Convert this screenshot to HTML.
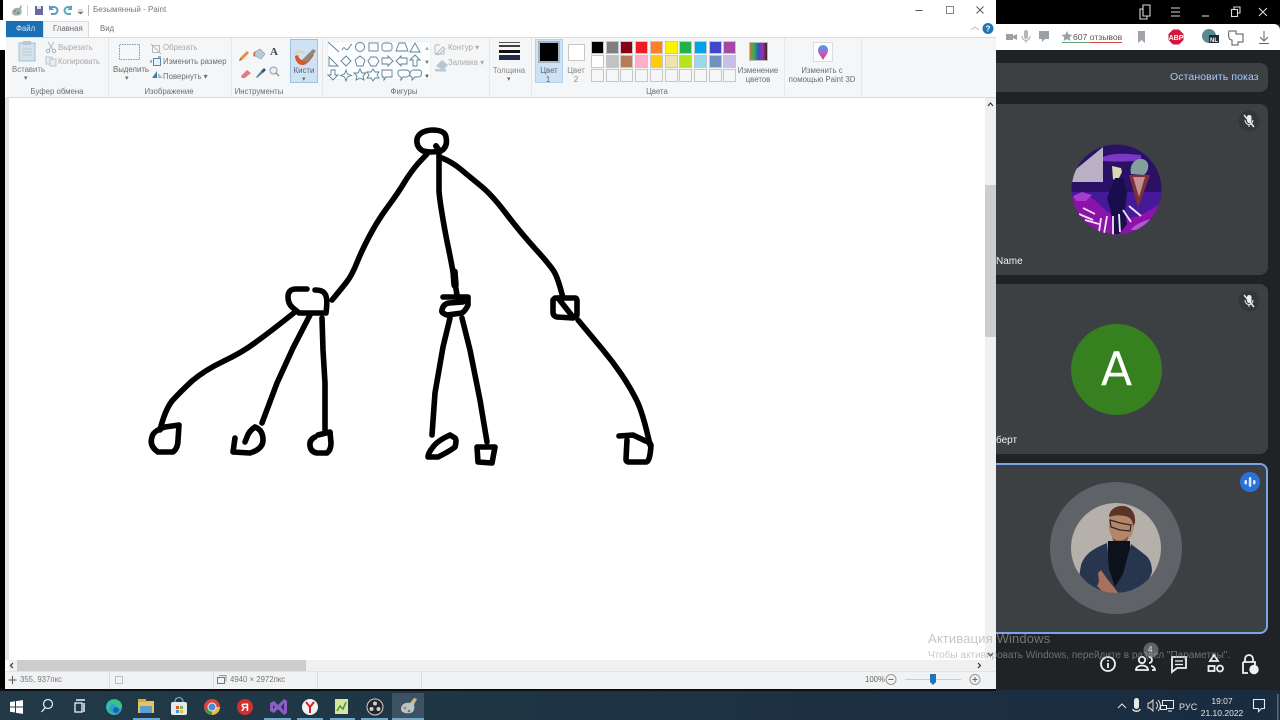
<!DOCTYPE html>
<html><head><meta charset="utf-8"><title>Paint</title>
<style>
html,body{margin:0;padding:0;width:1280px;height:720px;overflow:hidden;background:#202326}
body{position:relative;font-family:"Liberation Sans","Noto Sans CJK SC",sans-serif;filter:blur(.35px)}
.a{position:absolute}
.t{position:absolute;font-size:7.800px;line-height:10px;margin-top:1px;color:#6a6e72;white-space:nowrap;letter-spacing:0}
.c{text-align:center;transform:translateX(-50%)}
.tile{position:absolute;left:996px;width:272px;background:#3c4043;border-radius:0 8px 8px 0}
.sw{position:absolute;width:11px;height:11px;border:1px solid #c6c6c6}
svg{position:absolute;overflow:visible}
</style></head><body>

<!-- left edge -->
<div class="a" style="left:0;top:0;width:6px;height:50px;background:#fff"></div>
<div class="a" style="left:0;top:50px;width:5px;height:640px;background:#000"></div>
<div class="a" style="left:0;top:0;width:3px;height:20px;background:#000"></div>

<!-- paint window -->
<div class="a" style="left:5px;top:0;width:991px;height:689px;background:#fff"></div>
<div class="a" style="left:996px;top:50px;width:4px;height:48px;background:#202326"></div>

<!-- QAT -->
<svg style="left:0;top:0" width="120" height="22">
 <path d="M12 13c0-4 4-6 7-5l2-3 1 1-1 3c1 2 1 5-1 6s-8 1-8-2z" fill="#9fb0a8"/><circle cx="15" cy="11" r="1" fill="#e06a3a"/><circle cx="18" cy="13" r="1" fill="#4a7ac0"/>
 <rect x="27" y="5" width="1" height="11" fill="#d0d0d0"/>
 <rect x="35" y="6" width="8" height="9" fill="#6a6a9a"/><rect x="37" y="6" width="4" height="3" fill="#dde"/>
 <path d="M50 7h4a3 3 0 0 1 0 7h-3" fill="none" stroke="#5a9ac8" stroke-width="2"/><path d="M49 5v5h5z" fill="#5a9ac8"/>
 <path d="M71 7h-3a3 3 0 0 0 0 7h3" fill="none" stroke="#5aa8c0" stroke-width="2"/><path d="M72 5v5h-5z" fill="#5aa8c0"/>
 <path d="M78 10h5M78 12h5l-2.500 2z" fill="#666" stroke="#777" stroke-width=".6"/>
 <rect x="88" y="5" width="1" height="11" fill="#bbb"/>
</svg>
<div class="t" style="left:93px;top:4px;font-size:8px;color:#777">Безымянный - Paint</div>

<!-- window buttons -->
<svg style="left:900px;top:0" width="90" height="20">
 <path d="M15.500 10.500h7" stroke="#555"/><rect x="46.500" y="6.500" width="7" height="7" fill="none" stroke="#888"/>
 <path d="M76.500 6.500l7 7M83.500 6.500l-7 7" stroke="#555"/>
</svg>

<!-- tabs -->
<div class="a" style="left:6px;top:21px;width:37px;height:16px;background:#1a6fb5"></div>
<div class="t" style="left:16px;top:23px;color:#dfeaf4">Файл</div>
<div class="a" style="left:43px;top:21px;width:46px;height:17px;background:#f5f6f7;border:1px solid #dadbdc;border-bottom:none;box-sizing:border-box"></div>
<div class="t" style="left:53px;top:23px">Главная</div>
<div class="t" style="left:100px;top:23px">Вид</div>
<svg style="left:970px;top:22px" width="26" height="15"><path d="M1 8l4-3 4 3" fill="none" stroke="#c0c0c0"/><circle cx="18" cy="6.500" r="5.500" fill="#1d76b8"/><text x="18" y="9.500" font-size="8" font-weight="bold" fill="#fff" text-anchor="middle" font-family="Liberation Sans">?</text></svg>

<!-- ribbon -->
<div class="a" style="left:6px;top:37px;width:990px;height:59px;background:#f5f6f7;border-top:1px solid #dadbdc;border-bottom:1px solid #d8d9da"></div>
<div class="a" style="left:108px;top:38px;width:1px;height:58px;background:#e6e7e8"></div>
<div class="a" style="left:231px;top:38px;width:1px;height:58px;background:#e6e7e8"></div>
<div class="a" style="left:322px;top:38px;width:1px;height:58px;background:#e6e7e8"></div>
<div class="a" style="left:489px;top:38px;width:1px;height:58px;background:#e6e7e8"></div>
<div class="a" style="left:531px;top:38px;width:1px;height:58px;background:#e6e7e8"></div>
<div class="a" style="left:784px;top:38px;width:1px;height:58px;background:#e6e7e8"></div>
<div class="a" style="left:861px;top:38px;width:1px;height:58px;background:#e6e7e8"></div>

<!-- clipboard -->
<svg style="left:0;top:38px" width="110" height="40">
 <rect x="19" y="5" width="16" height="18" fill="#d3e2ec" stroke="#a9bfcc"/><rect x="23" y="3" width="8" height="4" fill="#b8c8d2"/>
 <path d="M22 11h10M22 14h10M22 17h10" stroke="#bccbd4"/>
 <path d="M48 4l5 8M54 4l-5 8" stroke="#bcc4ca" stroke-width="1.200"/><circle cx="48" cy="13" r="1.700" fill="none" stroke="#a8b0b6"/><circle cx="54" cy="13" r="1.700" fill="none" stroke="#a8b0b6"/>
 <rect x="46" y="19" width="6" height="7" fill="#e4eef4" stroke="#b7c7d2"/><rect x="50" y="21" width="6" height="7" fill="#e4eef4" stroke="#b7c7d2"/>
</svg>
<div class="t" style="left:12px;top:64px;color:#777">Вставить</div>
<div class="t" style="left:24px;top:73px;font-size:7px">▾</div>
<div class="t" style="left:58px;top:42px;color:#a8a8a8">Вырезать</div>
<div class="t" style="left:58px;top:56px;color:#a8a8a8">Копировать</div>
<div class="t c" style="left:57px;top:86px">Буфер обмена</div>

<!-- image -->
<svg style="left:110px;top:38px" width="120" height="50">
 <rect x="9.500" y="6.500" width="20" height="15" fill="#f3f8fb" stroke="#7f99ac" stroke-dasharray="1.500 1"/>
 <rect x="42.500" y="7.500" width="7" height="7" fill="none" stroke="#b4bcc2"/><path d="M41 6l10 10" stroke="#b4bcc2"/>
 <rect x="43.500" y="20.500" width="7" height="7" fill="#e9f2f8" stroke="#5a86a8"/><path d="M41 25v-3M48 19h3" stroke="#2f74a8"/>
 <path d="M42 40l5-7v7z" fill="#3d7fa8"/><path d="M48 40h5l-5-5z" fill="#9cc0d4"/>
</svg>
<div class="t" style="left:113px;top:64px;color:#666">Выделить</div>
<div class="t" style="left:125px;top:73px;font-size:7px">▾</div>
<div class="t" style="left:163px;top:42px;color:#a8a8a8">Обрезать</div>
<div class="t" style="left:163px;top:56px">Изменить размер</div>
<div class="t" style="left:163px;top:71px">Повернуть ▾</div>
<div class="t c" style="left:169px;top:86px">Изображение</div>

<!-- tools -->
<div class="a" style="left:290px;top:39px;width:28px;height:44px;background:#cde3f5;border:1px solid #9cc3e0;box-sizing:border-box"></div>
<svg style="left:236px;top:44px" width="90" height="40">
 <path d="M4 14l7-7 2 2-7 7z" fill="#e0913a"/><path d="M4 14l-1 3 3-1z" fill="#b06030"/>
 <path d="M19 8l5-3 5 5-4 5-6-3z" fill="#b8ccd8" stroke="#7e98aa" stroke-width=".6"/><path d="M19 8c-2 2-1 4 0 4" fill="none" stroke="#c04040"/>
 <path d="M5 32l6-6 4 3-6 5h-3z" fill="#e27b86"/>
 <path d="M20 33l5-6 2 2-6 5z" fill="#5d8aa8"/><path d="M25 27l3-3 2 2-3 3z" fill="#2c5a7a"/>
 <circle cx="37.500" cy="26.500" r="3.500" fill="#e8f1f6" stroke="#8aa0b0"/><path d="M40 29l3 3" stroke="#b48a50" stroke-width="1.500"/>
 <path d="M59 12c0 7 6 11 11 8 3-2 6-6 8-9l-2-1-6 6c-3 1-7 0-8-5z" fill="#d8582a"/>
 <path d="M59 10c2-3 7-3 10-1" fill="none" stroke="#e8cfa0" stroke-width="2"/>
 <path d="M66 16l11-11 3 2-9 11z" fill="#8d8a7a"/>
</svg>
<div class="t" style="left:270px;top:46px;font-size:11px;font-weight:bold;font-family:'Liberation Serif',serif;color:#3a4a58">A</div>
<div class="t c" style="left:304px;top:65px;color:#5a6066">Кисти</div>
<div class="t" style="left:302px;top:74px;font-size:7px">▾</div>
<div class="t c" style="left:259px;top:86px">Инструменты</div>

<!-- shapes -->
<div class="a" style="left:327px;top:41px;width:104px;height:39px;background:#fbfdfe;border:1px solid #eef2f4;box-sizing:border-box"></div>
<svg style="left:327px;top:41px" width="106" height="40" fill="none" stroke="#5c8096" stroke-width=".9">
 <path d="M1 1l11 10M15 9c3-6 3 2 6-1s2-4 4-5"/><circle cx="33" cy="6" r="4.500"/><rect x="42" y="2" width="9" height="8"/><rect x="55" y="2" width="10" height="8" rx="2.500"/><path d="M69 10l3-8h6l3 8z"/><path d="M83 11l5-9 5 9z"/>
 <path d="M2 25v-9l9 9zM19 15l5 5-5 5-5-5zM33 15l5 4-2 6h-6l-2-6zM44 16h5l3 4-3 5h-5l-3-5zM55 17h6v-2l5 5-5 5v-2h-6zM80 17h-6v-2l-5 5 5 5v-2h6zM88 14l5 5h-3v6h-4v-6h-3z"/>
 <path d="M4 29h4v5h3l-5 5-5-5h3zM19 29l1.500 4 4 1.500-4 1.500-1.500 4-1.500-4-4-1.500 4-1.500zM33 28l2 4h4l-3 3 1 4-4-2-4 2 1-4-3-3h4zM46 28l2 3h4l-2 3 2 3h-4l-2 3-2-3h-4l2-3-2-3h4z"/>
 <path d="M55 29h10v7h-6l-2 3v-3h-2zM73 29h6c5 0 5 7 0 7h-3l-2 3v-3c-4-1-4-7-1-7zM86 29h5c4 0 4 3 3 4 1 2-1 3-3 3h-3l-3 3v-3c-3 0-3-6 1-7z"/>
</svg>
<div class="t" style="left:424px;top:43px;font-size:6px;color:#aaa">▲</div>
<div class="t" style="left:424px;top:57px;font-size:6px;color:#777">▼</div>
<div class="t" style="left:424px;top:71px;font-size:6px;color:#555">▼</div>
<svg style="left:434px;top:42px" width="16" height="30"><path d="M2 12l7-7 2 2-7 6zM1 3h5M1 3v9h9V8" fill="none" stroke="#b4bcc2"/><path d="M2 24l6-6 6 5-5 5z" fill="#b5c6d2"/><rect x="1" y="27" width="11" height="2.500" fill="#c0c8ce"/></svg>
<div class="t" style="left:448px;top:42px;color:#a8a8a8">Контур ▾</div>
<div class="t" style="left:448px;top:57px;color:#a8a8a8">Заливка ▾</div>
<div class="t c" style="left:404px;top:86px">Фигуры</div>

<!-- thickness -->
<div class="a" style="left:499px;top:42px;width:21px;height:1px;background:#555"></div>
<div class="a" style="left:499px;top:45px;width:21px;height:2px;background:#3a3f44"></div>
<div class="a" style="left:499px;top:50px;width:21px;height:3px;background:#111"></div>
<div class="a" style="left:499px;top:55px;width:21px;height:5px;background:#1f2d4a"></div>
<div class="t c" style="left:509px;top:65px;color:#888">Толщина</div>
<div class="t" style="left:507px;top:74px;font-size:7px">▾</div>

<!-- colors -->
<div class="a" style="left:535px;top:39px;width:28px;height:44px;background:#cde3f5;border:1px solid #b1d2ec;box-sizing:border-box"></div>
<div class="a" style="left:538px;top:41px;width:22px;height:22px;background:#000;border:2px solid #a7b5c0;box-sizing:border-box"></div>
<div class="t c" style="left:549px;top:65px;color:#5d6368">Цвет</div><div class="t c" style="left:548px;top:74px;color:#5d6368">1</div>
<div class="a" style="left:568px;top:44px;width:17px;height:17px;background:#fff;border:1px solid #c6c6c6;box-sizing:border-box"></div>
<div class="t c" style="left:576px;top:65px;color:#888">Цвет</div><div class="t c" style="left:576px;top:74px;color:#888">2</div>

<div class="sw" style="left:591px;top:41px;background:#000"></div><div class="sw" style="left:606px;top:41px;background:#7f7f7f"></div><div class="sw" style="left:620px;top:41px;background:#880015"></div><div class="sw" style="left:635px;top:41px;background:#ed1c24"></div><div class="sw" style="left:650px;top:41px;background:#ff7f27"></div><div class="sw" style="left:665px;top:41px;background:#fff200"></div><div class="sw" style="left:679px;top:41px;background:#22b14c"></div><div class="sw" style="left:694px;top:41px;background:#00a2e8"></div><div class="sw" style="left:709px;top:41px;background:#3f48cc"></div><div class="sw" style="left:723px;top:41px;background:#a349a4"></div>
<div class="sw" style="left:591px;top:55px;background:#fff"></div><div class="sw" style="left:606px;top:55px;background:#c3c3c3"></div><div class="sw" style="left:620px;top:55px;background:#b97a57"></div><div class="sw" style="left:635px;top:55px;background:#ffaec9"></div><div class="sw" style="left:650px;top:55px;background:#ffc90e"></div><div class="sw" style="left:665px;top:55px;background:#efe4b0"></div><div class="sw" style="left:679px;top:55px;background:#b5e61d"></div><div class="sw" style="left:694px;top:55px;background:#99d9ea"></div><div class="sw" style="left:709px;top:55px;background:#7092be"></div><div class="sw" style="left:723px;top:55px;background:#c8bfe7"></div>
<div class="sw" style="left:591px;top:69px"></div><div class="sw" style="left:606px;top:69px"></div><div class="sw" style="left:620px;top:69px"></div><div class="sw" style="left:635px;top:69px"></div><div class="sw" style="left:650px;top:69px"></div><div class="sw" style="left:665px;top:69px"></div><div class="sw" style="left:679px;top:69px"></div><div class="sw" style="left:694px;top:69px"></div><div class="sw" style="left:709px;top:69px"></div><div class="sw" style="left:723px;top:69px"></div>
<div class="t c" style="left:657px;top:86px">Цвета</div>

<div class="a" style="left:749px;top:42px;width:19px;height:19px;background:linear-gradient(90deg,#c08030,#30b050,#3050d0,#a030a0,#402020);border:1px solid #bbb;box-sizing:border-box"></div>
<div class="t c" style="left:758px;top:65px">Изменение</div><div class="t c" style="left:758px;top:74px">цветов</div>
<div class="a" style="left:813px;top:42px;width:20px;height:20px;background:#fdfdfd;border:1px solid #ddd;box-sizing:border-box"></div>
<svg style="left:813px;top:42px" width="20" height="20"><defs><linearGradient id="g3" x1="0" y1="0" x2="0" y2="1"><stop offset="0" stop-color="#3aa8e8"/><stop offset=".5" stop-color="#b060d0"/><stop offset="1" stop-color="#e04050"/></linearGradient></defs><path d="M10 18c-2-4-5-6-5-10a5 5 0 0 1 10 0c0 4-3 6-5 10z" fill="url(#g3)"/></svg>
<div class="t c" style="left:822px;top:65px">Изменить с</div><div class="t c" style="left:822px;top:74px">помощью Paint 3D</div>

<!-- canvas edge -->
<div class="a" style="left:5px;top:98px;width:4px;height:562px;background:#e4e6e8"></div>

<!-- drawing -->
<svg style="left:0;top:0" width="996" height="690" fill="none" stroke="#000" stroke-width="5.600" stroke-linecap="round" stroke-linejoin="round">
 <path d="M432 130Q445 130 446 137Q448 147 441 151Q430 153 423 151Q416 147 417 139Q419 131 432 130Z"/>
 <path d="M436 146l2 3" stroke-width="6"/>
 <path d="M427 154L418 163.500Q410 173 404 183Q398 193 388 206.500Q378 220 370 235Q362 250 357 262.500Q352 275 347 281.500Q342 288 332 300"/>
 <path d="M439 152L439 190Q439 195 442 213.500Q445 232 448.500 248.500Q452 265 457 295"/>
 <path d="M454 272L455 285" stroke-width="7.500"/>
 <path d="M442 158Q452 162 461 169.500Q470 177 481 186Q492 195 506 213.500Q520 232 535 248.500Q550 265 554 271.500Q558 278 563 298"/>
 <path d="M307 289L296 289Q288 289 288 297Q288 304 293 308L298 312"/>
 <path d="M315 290Q323 290 325 294Q328 298 326 313L299 313"/>
 <path d="M295 312Q270 332 256 342Q243 352 224 361Q205 370 192 381Q180 392 172 401Q165 410 160 430"/>
 <path d="M179 425L165 427Q153 431 152 437Q149 446 158 452L173 452Q178 448 178 440Z"/>
 <path d="M310 315L293 348L277 383L262 423"/>
 <path d="M235 438L233 452L250 453Q263 449 263 440Q263 430 255 427Q249 431 247 437L245 442"/>
 <path d="M322 318L323 350L325 383L325 430"/>
 <path d="M315 437Q309 440 310 446Q311 452 317 453L327 453Q331 450 331 443L330 432L318 435"/>
 <path d="M443 297L468 297L468 305Q466 310 462 313L447 315Q441 313 442 310Q443 304 449 303L463 302"/>
 <path d="M450 318L443 347L435 393L432 435"/>
 <path d="M462 318L470 350L480 400L487 442"/>
 <path d="M450 435Q437 441 433 447Q428 453 428 457L438 457Q450 451 455 447Q457 440 455 438Z"/>
 <path d="M477 447L495 447L492 463L478 462Z"/>
 <path d="M555 298L575 298Q577 298 577 301L577 315L573 318L557 317Q553 316 553 312L553 300Z"/>
 <path d="M558 298L573 317"/>
 <path d="M578 320Q593 338 603 350Q613 362 621.500 374.500Q630 387 636.500 400Q643 413 650 445"/>
 <path d="M619 436L633 435L650 443"/>
 <path d="M627 440L626 459Q626 462 629 462L646 462Q650 462 651 445"/>
</svg>

<!-- v scroll -->
<div class="a" style="left:985px;top:98px;width:11px;height:562px;background:#f0f0f0"></div>
<div class="a" style="left:985px;top:185px;width:11px;height:152px;background:#cdcdcd"></div>
<svg style="left:985px;top:98px" width="11" height="12"><path d="M3 8l2.500-3L8 8" fill="none" stroke="#333" stroke-width="1.200"/></svg>
<!-- h scroll -->
<div class="a" style="left:9px;top:660px;width:987px;height:11px;background:#f0f0f0"></div>
<div class="a" style="left:17px;top:660px;width:289px;height:11px;background:#cdcdcd"></div>
<svg style="left:9px;top:660px" width="980" height="11"><path d="M4 3L1.500 5.500 4 8" fill="none" stroke="#333" stroke-width="1.200"/><path d="M969 3l2.500 2.500L969 8" fill="none" stroke="#333" stroke-width="1.200"/></svg>
<svg style="left:985px;top:650px" width="11" height="10"><path d="M3 3l2.500 3L8 3" fill="none" stroke="#333" stroke-width="1.200"/></svg>

<!-- status -->
<div class="a" style="left:5px;top:671px;width:991px;height:18px;background:#f1f2f3;border-top:1px solid #e2e3e4;box-sizing:border-box"></div>
<div class="a" style="left:109px;top:672px;width:1px;height:17px;background:#dcdcdc"></div>
<div class="a" style="left:213px;top:672px;width:1px;height:17px;background:#dcdcdc"></div>
<div class="a" style="left:317px;top:672px;width:1px;height:17px;background:#dcdcdc"></div>
<div class="a" style="left:421px;top:672px;width:1px;height:17px;background:#dcdcdc"></div>
<svg style="left:8px;top:675px" width="130" height="11"><path d="M4.500 1v8M.5 5h8" stroke="#555"/><rect x="107.500" y="1.500" width="7" height="7" fill="none" stroke="#888" stroke-dasharray="1 1"/></svg>
<svg style="left:217px;top:675px" width="12" height="11"><rect x=".5" y="2.500" width="7" height="6" fill="none" stroke="#777"/><path d="M2 .5h7v6" fill="none" stroke="#999"/></svg>
<div class="t" style="left:20px;top:674px;color:#777">355, 937пкс</div>
<div class="t" style="left:230px;top:674px;color:#777">4940 × 2972пкс</div>
<div class="t" style="left:865px;top:674px;color:#666">100%</div>
<svg style="left:885px;top:672px" width="108" height="16">
 <circle cx="6" cy="7.500" r="5" fill="none" stroke="#999"/><path d="M3.500 7.500h5" stroke="#666"/>
 <path d="M20 7.500h56" stroke="#ccc"/><path d="M45 2h6v8l-3 3-3-3z" fill="#1f73b8"/>
 <circle cx="90" cy="7.500" r="5" fill="none" stroke="#999"/><path d="M87.500 7.500h5M90 5v5" stroke="#666"/>
</svg>

<!-- browser top -->
<div class="a" style="left:996px;top:0;width:284px;height:24px;background:#000"></div>
<svg style="left:996px;top:0" width="284" height="24" fill="none" stroke="#d8d8d8" stroke-width="1.100">
 <path d="M147 9h-3v10h7v-3M147 8V5h7v11h-7z"/>
 <path d="M175 8h9M175 12h9M175 16h9"/>
 <path d="M206 16h7"/>
 <rect x="235.500" y="9.500" width="6" height="7"/><path d="M238 9V7h6v6h-2"/>
 <path d="M264 8l8 8M272 8l-8 8" transform="translate(-1 0)"/>
</svg>
<div class="a" style="left:996px;top:24px;width:284px;height:26px;background:#fff;border-radius:0 6px 0 0"></div>
<svg style="left:996px;top:24px" width="284" height="26">
 <rect x="10" y="10" width="7" height="6" fill="#9aa0a4"/><path d="M17 12l4-2v6l-4-2z" fill="#9aa0a4"/>
 <rect x="28" y="6" width="4" height="9" rx="2" fill="#b4b8bb"/><path d="M26 12c0 6 8 6 8 0M30 16v3" fill="none" stroke="#b4b8bb" stroke-width="1.200"/>
 <path d="M43 7h10v8h-4l-3 3v-3h-3z" fill="#9aa0a4"/>
 <path d="M71 7l1.700 3.500 3.800.4-2.800 2.500.8 3.600-3.500-1.900-3.500 1.900.8-3.600-2.800-2.500 3.800-.4z" fill="#9aa0a4"/>
 <rect x="66" y="18" width="28" height="1" fill="#5fa878"/><rect x="94" y="18" width="32" height="1" fill="#cf4a44"/>
 <path d="M142 7h7v12l-3.500-3-3.500 3z" fill="#a0a4a8"/>
 <path d="M173 5.500h6l4.500 4.500v6l-4.500 4.500h-6l-4.500-4.500v-6z" fill="#d4173a" transform="translate(4 0)"/>
 <text x="180" y="16" font-size="7" font-weight="bold" fill="#fff" text-anchor="middle" font-family="Liberation Sans">ABP</text>
 <circle cx="213" cy="12" r="7" fill="#5a8a90"/><rect x="213" y="11" width="10" height="8" fill="#1a2a33"/><text x="218" y="18" font-size="6" font-weight="bold" fill="#fff" text-anchor="middle" font-family="Liberation Sans">NL</text>
 <path d="M233 7h7v3h7v8h-5v3h-6v-5c-3 0-4-3-3-9z" fill="none" stroke="#555" stroke-width="1"/>
 <path d="M268 7v9M264 13l4 4 4-4M263 19.500h10" fill="none" stroke="#666" stroke-width="1"/>
</svg>
<div class="t" style="left:1073px;top:31px;font-size:8.600px;color:#555">607 отзывов</div>

<!-- meet panel -->
<div class="a" style="left:996px;top:50px;width:284px;height:640px;background:#202326"></div>
<div class="a" style="left:996px;top:63px;width:272px;height:29px;background:#3c4043;border-radius:0 8px 8px 0"></div>
<div class="t" style="left:1170px;top:70px;font-size:10.500px;line-height:13px;color:#a8c7fa;letter-spacing:.1px">Остановить показ</div>

<div class="tile" style="top:104px;height:171px"></div>
<div class="tile" style="top:284px;height:170px"></div>
<div class="tile" style="top:463px;height:171px;border:2px solid #7ba5e6;border-left:none;box-sizing:border-box"></div>
<div class="a" style="left:996px;top:463px;width:2px;height:2px;background:#7ba5e6"></div>

<!-- avatar 1 -->
<svg style="left:1071px;top:144px" width="91" height="91">
 <defs><clipPath id="av1"><circle cx="45.500" cy="45.500" r="45"/></clipPath><clipPath id="av2"><circle cx="45" cy="45" r="45"/></clipPath></defs>
 <g clip-path="url(#av1)">
  <rect width="91" height="91" fill="#2b1166"/>
  <rect y="48" width="91" height="43" fill="#46189a"/>
  <path d="M0 54c8-5 16-4 22 1 8 6 14 14 24 18 14 5 28-4 45-14v32H0z" fill="#8c12ac"/>
  <path d="M32 3L4 26 1 38h31z" fill="#b9b0c6"/>
  <path d="M32 13c12-5 26-3 38-2v5c-12 2-26 2-38 1z" fill="#7a38c4"/>
  <path d="M60 30c-2-9 4-16 11-15 8 1 8 11 2 16z" fill="#84a09c"/>
  <path d="M58 31h21l-12 33z" fill="#7c2f3c"/><path d="M62 33h12l-6 20z" fill="#c49090"/>
  <path d="M41 22l9 2 1 4-5 10-4-3z" fill="#ddd8b4"/>
  <path d="M44 34l8 0 4 14-2 20 2 12-8 10h-6l-2-22-4-14z" fill="#180e4c"/>
  <path d="M12 64l12 6M8 70l14 6M14 76l14 4M30 74l-2 14M36 72l-3 18M42 72v20M48 70l1 18M52 66l8 12M58 62l12 10" stroke="#f0e8f0" stroke-width="1.800" fill="none"/>
  <path d="M2 52l9-4 10 3-6 6-10 0z" fill="#a63cc8"/><path d="M60 86c5-8 18-10 28-14l-4 14z" fill="#b558d4"/>
 </g>
</svg>

<!-- avatar A -->
<div class="a" style="left:1071px;top:324px;width:91px;height:91px;border-radius:50%;background:#37801f"></div>
<div class="a" style="left:1071px;top:344px;width:91px;height:50px;line-height:50px;text-align:center;color:#fff;font-size:46px;font-family:'DejaVu Sans',sans-serif">A</div>

<!-- avatar 3 -->
<div class="a" style="left:1050px;top:482px;width:132px;height:132px;border-radius:50%;background:#5f6368"></div>
<svg style="left:1071px;top:503px" width="90" height="91">
 <g clip-path="url(#av2)">
  <rect width="90" height="91" fill="#b5b1aa"/>
  <path d="M52 5c-8 0-13 4-14 13-1 11 3 19 10 21 8 1 14-6 15-16 1-10-3-18-11-18z" fill="#b58668"/>
  <path d="M38 14c0-7 7-12 15-11 7 1 12 7 11 17l-2 3c0-6-3-9-8-10-6-1-11-1-16 1z" fill="#5b3428"/>
  <path d="M41 34c4 5 12 5 16-1l-1 8H43z" fill="#7a5040"/>
  <path d="M39 17l10 3 11 2-1 6-10-1-9-3z" fill="none" stroke="#2a2a2e" stroke-width="1.200"/>
  <path d="M37 38h22v46H36z" fill="#0c111c"/>
  <path d="M36 40C24 45 14 50 10 62L8 74l22 17h42l9-22c0-8-2-14-8-18L60 41l-8 30-8 13-6-18z" fill="#27354f"/>
  <path d="M27 70l3-3 7 10 5 6 6 8H34l-8-8 2-4z" fill="#a9705c"/>
 </g>
</svg>

<!-- tile icons -->
<svg style="left:1238px;top:110px" width="24" height="24"><circle cx="11" cy="11" r="10.500" fill="#33373a"/><rect x="9" y="5" width="4.500" height="8" rx="2.200" fill="#eee"/><path d="M7 10c0 6 8 6 8 0M11 14v3" fill="none" stroke="#eee"/><path d="M6 5l10 12" stroke="#eee" stroke-width="1.400"/></svg>
<svg style="left:1238px;top:290px" width="24" height="24"><circle cx="11" cy="11" r="10.500" fill="#33373a"/><rect x="9" y="5" width="4.500" height="8" rx="2.200" fill="#eee"/><path d="M7 10c0 6 8 6 8 0M11 14v3" fill="none" stroke="#eee"/><path d="M6 5l10 12" stroke="#eee" stroke-width="1.400"/></svg>
<svg style="left:1239px;top:471px" width="22" height="22"><circle cx="11" cy="11" r="10" fill="#2a72d8"/><rect x="5.500" y="9" width="2.500" height="4.500" rx="1.200" fill="#dce9fb"/><rect x="9.800" y="6" width="2.500" height="10" rx="1.200" fill="#dce9fb"/><rect x="14" y="9" width="2.500" height="4.500" rx="1.200" fill="#dce9fb"/></svg>

<!-- names -->
<div class="t" style="left:996px;top:255px;font-size:10px;line-height:12px;color:#f2f2f2">Name</div>
<div class="t" style="left:996px;top:434px;font-size:10px;line-height:12px;color:#f2f2f2">берт</div>

<!-- bottom meet icons -->
<svg style="left:1095px;top:640px" width="170" height="42" fill="none" stroke="#f0f0f0" stroke-width="1.800">
 <circle cx="13" cy="24" r="7"/><path d="M13 23v5M13 20v1.500"/>
 <circle cx="56" cy="10" r="7.500" fill="#5f6368" stroke="none"/>
 <circle cx="47" cy="20" r="3.200"/><path d="M41 30c0-6 12-6 12 0z"/><path d="M54 17a3 3 0 0 1 0 6M56 26c2 0 4 2 4 4h-3"/>
 <path d="M77 17h14v11h-9l-5 4z"/><path d="M80 21h8M80 24.500h8" stroke-width="1.200"/>
 <path d="M119 15l4 6h-8z"/><rect x="113.500" y="26" width="6" height="5"/><circle cx="125" cy="28.500" r="3"/>
 <path d="M150 22v-3a4 4 0 0 1 8 0v3M148 22h12v3M148 22v11h5"/><circle cx="159" cy="29.500" r="3.800" fill="#f0f0f0"/>
</svg>
<div class="t" style="left:1148px;top:644px;font-size:8px;color:#e8e8e8">4</div>

<!-- activation -->
<div class="t" style="left:928px;top:630px;font-size:13px;line-height:16px;color:#a4a4a4;opacity:.62;letter-spacing:.15px">Активация Windows</div>
<div class="t" style="left:928px;top:649px;font-size:10px;line-height:12px;color:#a4a4a4;opacity:.6">Чтобы активировать Windows, перейдите в раздел "Параметры".</div>

<!-- taskbar -->
<div class="a" style="left:0;top:690px;width:1280px;height:30px;background:linear-gradient(90deg,#223a47 0,#1f3745 30%,#1c2f42 70%,#1a2c40 100%)"></div>
<div class="a" style="left:0;top:689px;width:996px;height:2px;background:#0c0f12"></div>
<div class="a" style="left:392px;top:693px;width:32px;height:27px;background:#3c5262"></div>
<svg style="left:0;top:691px" width="430" height="29">
 <path d="M10 11l5-.7v5.200h-5zM16 10.100l7-1v6.400h-7zM10 16.500h5v5l-5-.7zM16 16.500h7v6.400l-7-1z" fill="#fff"/>
 <circle cx="48" cy="13" r="4.500" fill="none" stroke="#eef" stroke-width="1.200"/><path d="M45 17l-3.500 4" stroke="#eef" stroke-width="1.300"/>
 <rect x="75" y="12" width="7" height="9" fill="none" stroke="#eef" stroke-width="1.300"/><path d="M76 9h9M84 12v9" stroke="#eef" stroke-width="1.500"/>
 <circle cx="114" cy="16" r="8" fill="#2d9fd8"/><path d="M107 14c2-7 14-8 15 1 0 3-5 3-6 1 1-4-7-4-7 2 0 4 7 6 11 4-5 4-15 1-13-8z" fill="#39c28d"/><circle cx="116" cy="19" r="3" fill="#1668b0"/>
 <rect x="138" y="10" width="16" height="12" fill="#e8c35c"/><rect x="138" y="8" width="8" height="3" fill="#d6a93e"/><rect x="140" y="15" width="12" height="7" fill="#5b9fd4"/>
 <rect x="171" y="11" width="16" height="13" rx="2" fill="#e6e9ea"/><path d="M175 11c0-6 8-6 8 0" fill="none" stroke="#5ca8c8" stroke-width="1.300"/><rect x="176" y="15" width="3" height="3" fill="#e0562c"/><rect x="180" y="15" width="3" height="3" fill="#74b64a"/><rect x="176" y="19" width="3" height="3" fill="#3a9ad8"/><rect x="180" y="19" width="3" height="3" fill="#e8bb3e"/>
 <circle cx="212" cy="16" r="8" fill="#d8453a"/><path d="M212 16l-7 4a8 8 0 0 0 7 4z" fill="#3f9a4e"/><path d="M212 16h8a8 8 0 0 1-8 8z" fill="#e0c044"/><circle cx="212" cy="16" r="4" fill="#4a8ad8" stroke="#eee"/>
 <circle cx="245" cy="16" r="8" fill="#d42f2a"/><text x="245" y="20" font-size="11" font-weight="bold" fill="#fff" text-anchor="middle" font-family="Liberation Sans">Я</text>
 <path d="M270 12l4-2 4 4 6-6 3 2v12l-3 2-6-6-4 4-4-2zM273 14v4l2-2zM284 12l-3 4 3 4z" fill="#8a5ec8" fill-rule="evenodd"/>
 <circle cx="310" cy="16" r="8" fill="#f2f2f2"/><path d="M306 11l4 5 4-5M310 16v6" fill="none" stroke="#d8202c" stroke-width="2"/>
 <rect x="335" y="8" width="13" height="15" fill="#d8e4a0"/><path d="M337 20l3-5 3 3 3-7" fill="none" stroke="#3d9a3d" stroke-width="1.500"/>
 <circle cx="375" cy="16" r="8" fill="#23262a" stroke="#cfcfcf"/><circle cx="375" cy="12.500" r="2" fill="#cfcfcf"/><circle cx="371.500" cy="18" r="2" fill="#cfcfcf"/><circle cx="378.500" cy="18" r="2" fill="#cfcfcf"/>
 <path d="M401 18c0-5 5-7 9-6l4-5 2 1-2 6c1 3 0 7-3 8-4 1-10 0-10-4z" fill="#b7c6c4"/><circle cx="405" cy="17" r="1.300" fill="#e06a3a"/><circle cx="409" cy="20" r="1.300" fill="#4a7ac0"/><path d="M412 11l3-4 2 1-2 4z" fill="#d8b060"/>
 <g fill="#6fa8cb"><rect x="133" y="27" width="27" height="2"/><rect x="264" y="27" width="27" height="2"/><rect x="297" y="27" width="26" height="2"/><rect x="330" y="27" width="25" height="2"/><rect x="361" y="27" width="27" height="2"/><rect x="392" y="27" width="32" height="2"/></g>
</svg>

<!-- tray -->
<svg style="left:1110px;top:691px" width="170" height="29" fill="none" stroke="#e8e8e8">
 <path d="M8 17l4-4 4 4"/>
 <rect x="24" y="7" width="5" height="11" rx="2.500" fill="#e8e8e8" stroke="none"/><path d="M23 18c0 3 7 3 7 0" stroke-width="1.400"/>
 <path d="M38 12h2l3-3v11l-3-3h-2zM46 11c2 2 2 5 0 7M48 9c3 3 3 8 0 11" stroke-width=".9"/>
 <rect x="52.500" y="9.500" width="11" height="8"/><rect x="50.500" y="14.500" width="6" height="4" fill="#1c2f42"/><path d="M58 20h4"/>
 <path d="M143.500 8.500h11v9h-3l-3 3v-3h-5z" stroke-width="1.100"/>
 <rect x="167" y="3" width="1.500" height="26" fill="#5a6a78" stroke="none"/>
</svg>
<div class="t" style="left:1179px;top:701px;font-size:9px;color:#e0e0e0;letter-spacing:.1px">РУС</div>
<div class="t c" style="left:1222px;top:695px;font-size:8.500px;color:#e4e4e4">19:07</div>
<div class="t c" style="left:1222px;top:707px;font-size:8.500px;color:#e4e4e4">21.10.2022</div>

</body></html>
